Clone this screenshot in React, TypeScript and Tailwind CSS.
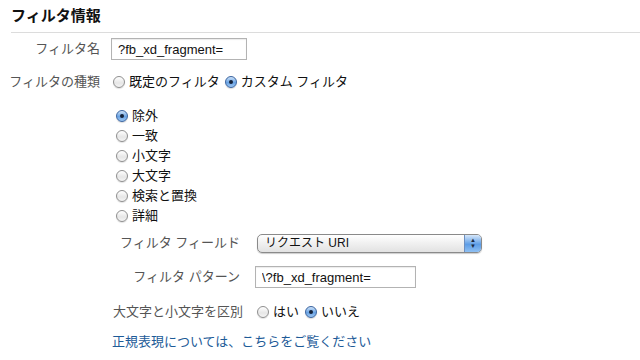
import React from "react";

const font = "font-['Liberation_Sans','Noto_Sans_CJK_JP',sans-serif]";

function Radio({ checked = false }: { checked?: boolean }) {
  if (checked) {
    return (
      <span className="relative inline-block h-[12px] w-[12px] shrink-0 rounded-full border border-[#3a64a0] bg-[linear-gradient(to_bottom,#cfe3f8,#6aa3e4_55%,#9cc6f2)] shadow-[0_1px_1px_rgba(0,0,0,0.15)]">
        <span className="absolute left-1/2 top-1/2 h-[4px] w-[4px] -translate-x-1/2 -translate-y-1/2 rounded-full bg-[#15233a]" />
      </span>
    );
  }
  return (
    <span className="inline-block h-[12px] w-[12px] shrink-0 rounded-full border border-[#8e8e8e] bg-[linear-gradient(to_bottom,#ffffff,#e6e6e6_60%,#f5f5f5)] shadow-[0_1px_1px_rgba(0,0,0,0.12)]" />
  );
}

function Option({ label, checked }: { label: string; checked?: boolean }) {
  return (
    <span className="flex items-center gap-[4px] text-[#111]">
      <Radio checked={checked} />
      <span>{label}</span>
    </span>
  );
}

const filterTypes = ["除外", "一致", "小文字", "大文字", "検索と置換", "詳細"];

export default function App() {
  return (
    <div className={`${font} h-[360px] w-[640px] overflow-hidden bg-white text-[13px] leading-[18px] text-[#555]`}>
      <h2 className="ml-[11px] mt-[7px] h-[18px] text-[15px] font-bold leading-[18px] text-[#111]">
        フィルタ情報
      </h2>
      <div className="ml-[11px] mt-[7px] border-t border-[#dcdcdc]" />

      <div className="mt-[5px] flex h-[22px] items-center">
        <span className="w-[100px] whitespace-nowrap text-right">フィルタ名</span>
        <input
          readOnly
          value="?fb_xd_fragment="
          className="ml-[11px] h-[22px] w-[136px] border border-[#b3b3b3] px-[6px] text-[13px] text-[#111] shadow-[inset_0_1px_1px_rgba(0,0,0,0.08)] outline-none"
        />
      </div>

      <div className="mt-[13px] flex h-[18px] items-center">
        <span className="w-[100px] whitespace-nowrap text-right">フィルタの種類</span>
        <span className="ml-[13px] flex items-center gap-[5px]">
          <Option label="既定のフィルタ" />
          <Option label="カスタム フィルタ" checked />
        </span>
      </div>

      <div className="ml-[116px] mt-[15px] flex flex-col">
        {filterTypes.map((t, i) => (
          <div key={t} className="flex h-[20px] items-center">
            <Option label={t} checked={i === 0} />
          </div>
        ))}
      </div>

      <div className="mt-[7px] flex h-[20px] items-center">
        <span className="w-[240px] whitespace-nowrap text-right">フィルタ フィールド</span>
        <div className="ml-[17px] flex h-[19px] w-[225px] items-center overflow-hidden rounded-[5px] border border-[#8a8a8a] bg-[linear-gradient(to_bottom,#ffffff,#f0f0f0_50%,#e2e2e2)] shadow-[0_1px_1px_rgba(0,0,0,0.2)]">
          <span className="flex-1 pl-[7px] text-[12px] text-[#111]">リクエスト URI</span>
          <span className="flex h-full w-[17px] flex-col items-center justify-center border-l border-[#6d8fbf] bg-[linear-gradient(to_bottom,#d6e7fa,#5d9de6_55%,#8fc0f3)] text-[6px] leading-[6px] text-[#1c2a40]">
            <span>▲</span>
            <span>▼</span>
          </span>
        </div>
      </div>

      <div className="mt-[13px] flex h-[22px] items-center">
        <span className="w-[240px] whitespace-nowrap text-right">フィルタ パターン</span>
        <input
          readOnly
          value="\?fb_xd_fragment="
          className="ml-[15px] h-[22px] w-[161px] border border-[#b3b3b3] px-[6px] text-[13px] text-[#111] shadow-[inset_0_1px_1px_rgba(0,0,0,0.08)] outline-none"
        />
      </div>

      <div className="mt-[15px] flex h-[18px] items-center">
        <span className="w-[243px] whitespace-nowrap text-right">大文字と小文字を区別</span>
        <span className="ml-[14px] flex items-center gap-[6px]">
          <Option label="はい" />
          <Option label="いいえ" checked />
        </span>
      </div>

      <div className="ml-[112px] mt-[12px] h-[18px]">
        <a className="cursor-pointer text-[#1d5b98]">正規表現については、こちらをご覧ください</a>
      </div>
    </div>
  );
}
